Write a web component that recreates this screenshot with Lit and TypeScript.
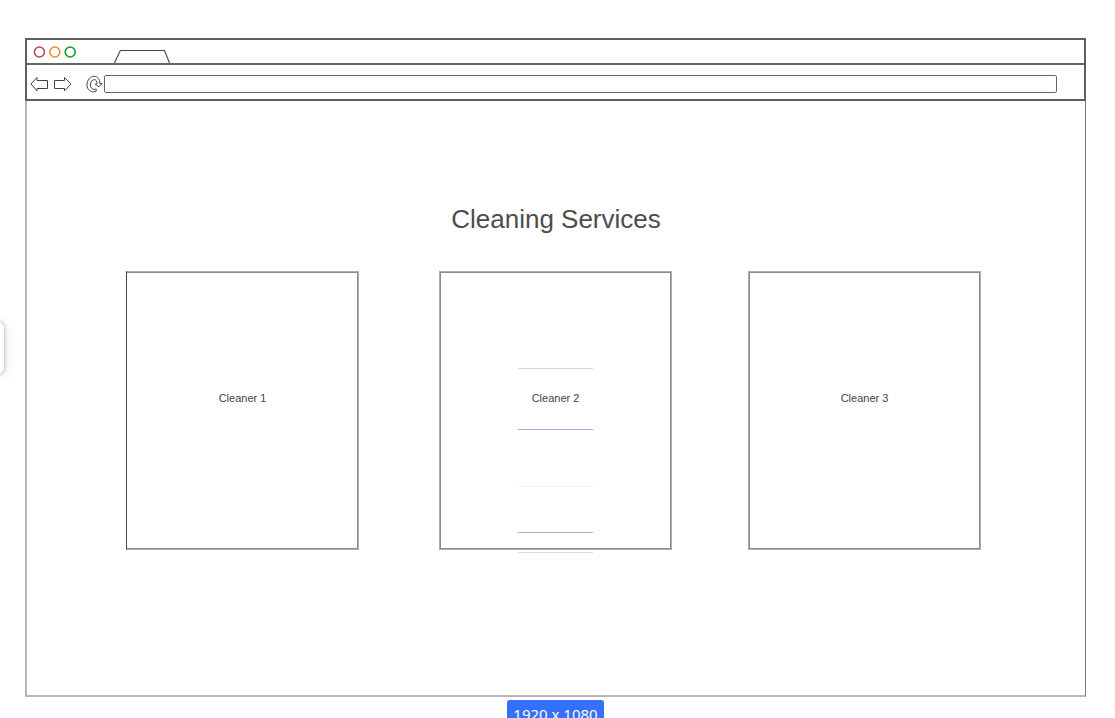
import { LitElement, html, css } from "lit";
import { customElement, property } from "lit/decorators.js";
import { classMap } from "lit/directives/class-map.js";

@customElement("browser-bar")
class BrowserBar extends LitElement {
  static styles = css`
    :host {
      display: block;
      border: 2px solid #5e5e60;
    }
    .tabs {
      display: flex;
      align-items: flex-end;
      justify-content: flex-start;
      gap: 36px;
      height: 23px;
      padding-left: 6px;
      border-bottom: 2px solid #666668;
    }
    .lights {
      align-self: center;
    }
    svg {
      display: block;
      fill: none;
      stroke: #444;
    }
    .tools {
      display: flex;
      align-items: center;
      height: 30px;
      padding: 4px 27px 0 3px;
    }
    button {
      padding: 0;
      border: 0;
      background: none;
    }
    .forward {
      margin-left: 4px;
    }
    .reload {
      margin-left: 14px;
    }
    .address {
      box-sizing: border-box;
      flex: 1;
      min-width: 0;
      height: 18px;
      margin-left: 1px;
      padding: 0 6px;
      border: 1px solid #666;
      border-radius: 2px;
      background: #fff;
      font: 11px "Liberation Sans", Arial, sans-serif;
      color: #444;
      outline: none;
    }
  `;

  render() {
    return html`
      <div class="tabs">
        <svg class="lights" width="44" height="13" viewBox="0 0 44 13" stroke-width="1.6">
          <circle cx="6.4" cy="7" r="5" stroke="#bd4755" />
          <circle cx="21.8" cy="7" r="5" stroke="#e2912c" />
          <circle cx="37.2" cy="7" r="5" stroke="#0aa01e" />
        </svg>
        <svg width="58" height="14" viewBox="0 0 58 14" stroke-width="1.1">
          <path d="M1.5 14L7.3 1.5H51.5L56.5 14" />
        </svg>
      </div>
      <div class="tools">
        <button aria-label="Back">
          <svg width="19" height="16" viewBox="0 0 19 16">
            <path d="M1 8L7 1.5V4.5H17.5V12.5H7V14.8Z" />
          </svg>
        </button>
        <button class="forward" aria-label="Forward">
          <svg width="19" height="16" viewBox="0 0 19 16">
            <path d="M18 8L11.5 1.5V4.5H1.5V12.5H11.5V14.8Z" />
          </svg>
        </button>
        <button class="reload" aria-label="Reload">
          <svg width="17" height="18" viewBox="0 0 17 18">
            <path
              d="M10 16.6C5 17.6 1 14.9 1 10.2C1 5 4.2 1.3 8.2 1.3C11.8 1.3 13.8 4.3 13.8 8.6H16L13 11.8L9.2 9.2L11 8.7C11 6.2 10 4.6 8.2 4.6C6 4.6 4.4 7.2 4.4 10.2C4.4 13.2 6.8 14.9 10.3 14.2Z"
            />
          </svg>
        </button>
        <input class="address" type="text" aria-label="Address" />
      </div>
    `;
  }
}

@customElement("cleaner-card")
class CleanerCard extends LitElement {
  @property() label = "";
  @property({ type: Boolean }) guides = false;
  @property({ type: Boolean }) thin = false;

  static styles = css`
    :host {
      display: block;
    }
    .card {
      position: relative;
      box-sizing: border-box;
      display: flex;
      align-items: center;
      justify-content: center;
      min-height: 279px;
      padding-bottom: 25px;
      border: 1px solid #adadad;
      box-shadow: inset 0 0 0 1px #8c8c8c;
      font: 11px/14px "Liberation Sans", Arial, sans-serif;
      color: #444;
    }
    .thin {
      border-left-color: #444;
      box-shadow: inset -1px 1px #8c8c8c, inset 0 -1px #8c8c8c;
    }
    .guide {
      position: absolute;
      left: 50%;
      width: 75px;
      height: 1px;
      margin-left: -38px;
    }
    .g1 {
      top: 96px;
      background: #c9d7ec;
    }
    .g2 {
      top: 157px;
      background: #9fb2d8;
    }
    .g3 {
      top: 214px;
      background: #f0f0f2;
    }
    .g4 {
      top: 260px;
      background: #9fb2d0;
    }
    .g5 {
      top: 280px;
      background: #d3dfec;
    }
  `;

  render() {
    return html`
      <article class=${classMap({ card: true, thin: this.thin })}>
        <span>${this.label}</span>
        ${this.guides
          ? [1, 2, 3, 4, 5].map((n) => html`<i class="guide g${n}"></i>`)
          : null}
      </article>
    `;
  }
}

@customElement("app-root")
class AppRoot extends LitElement {
  static styles = css`
    :host {
      display: block;
      position: relative;
      box-sizing: border-box;
      height: 100vh;
      overflow: hidden;
      padding: 38px 29px 0 25px;
      background: #fff;
      font-family: "Liberation Sans", Arial, sans-serif;
    }
    .page {
      box-sizing: border-box;
      min-height: 596px;
      padding-top: 100px;
      border: solid #b6b6b6;
      border-width: 0 1px 2px 2px;
      border-right-color: #777;
    }
    h1 {
      margin: 0 0 34px;
      font-size: 26px;
      line-height: 36px;
      font-weight: 400;
      text-align: center;
      color: #4d4d4d;
    }
    .cards {
      display: grid;
      grid-template-columns: 233fr 80fr 233fr 76fr 233fr;
      padding: 0 104px 0 99px;
    }
    .second {
      grid-column: 3;
    }
    .third {
      grid-column: 5;
    }
    .size {
      display: block;
      width: 97px;
      margin: 3px auto 0;
      border-radius: 3px;
      background: #3470fa;
      font: 15px/29px "Noto Sans", sans-serif;
      text-align: center;
      color: #fff;
    }
    .handle {
      position: absolute;
      left: -12px;
      top: 322px;
      width: 16px;
      height: 52px;
      border-radius: 6px;
      background: #fff;
      box-shadow: 0 0 4px rgba(0, 0, 0, 0.35), 2px 2px 16px rgba(0, 0, 0, 0.06);
    }
  `;

  render() {
    return html`
      <div class="handle"></div>
      <browser-bar></browser-bar>
      <main class="page">
        <h1>Cleaning Services</h1>
        <div class="cards">
          <cleaner-card label="Cleaner 1" thin></cleaner-card>
          <cleaner-card class="second" label="Cleaner 2" guides></cleaner-card>
          <cleaner-card class="third" label="Cleaner 3"></cleaner-card>
        </div>
      </main>
      <output class="size">1920 x 1080</output>
    `;
  }
}
